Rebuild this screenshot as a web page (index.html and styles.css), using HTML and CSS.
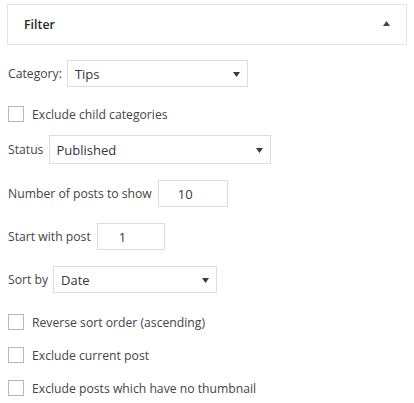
FILE: index.html
```html
<!DOCTYPE html>
<html>
<head>
<meta charset="utf-8">
<link rel="stylesheet" href="styles.css">
</head>
<body>
<div class="page">
  <div class="panel-head">
    <span class="panel-title">Filter</span>
    <svg class="toggle" width="7" height="5" viewBox="0 0 7 5"><polygon points="3.5,0 7,5 0,5" fill="#444"/></svg>
  </div>

  <div class="row r-cat">
    <span class="label">Category:</span>
    <div class="select w-cat"><span>Tips</span><svg class="caret" width="7" height="5" viewBox="0 0 7 5"><polygon points="0,0 7,0 3.5,5" fill="#3c3c3c"/></svg></div>
  </div>

  <label class="row check r-child"><span class="box"></span><span class="label">Exclude child categories</span></label>

  <div class="row r-status">
    <span class="label">Status</span>
    <div class="select w-status"><span>Published</span><svg class="caret" width="7" height="5" viewBox="0 0 7 5"><polygon points="0,0 7,0 3.5,5" fill="#3c3c3c"/></svg></div>
  </div>

  <div class="row r-num">
    <span class="label">Number of posts to show</span>
    <div class="input w-num">10</div>
  </div>

  <div class="row r-start">
    <span class="label">Start with post</span>
    <div class="input w-start">1</div>
  </div>

  <div class="row r-sort">
    <span class="label">Sort by</span>
    <div class="select w-sort"><span>Date</span><svg class="caret" width="7" height="5" viewBox="0 0 7 5"><polygon points="0,0 7,0 3.5,5" fill="#3c3c3c"/></svg></div>
  </div>

  <label class="row check r-rev"><span class="box"></span><span class="label">Reverse sort order (ascending)</span></label>
  <label class="row check r-cur"><span class="box"></span><span class="label">Exclude current post</span></label>
  <label class="row check r-thumb"><span class="box"></span><span class="label">Exclude posts which have no thumbnail</span></label>
</div>
</body>
</html>
```

FILE: styles.css
```css
html, body {
  margin: 0;
  padding: 0;
  background: #fff;
}
body {
  font-family: "Open Sans", "Noto Sans", sans-serif;
  font-size: 12.2px;
  color: #444444;
}
.page {
  padding: 4px 8px 0 8px;
  display: flex;
  flex-direction: column;
}
.panel-head {
  margin-left: -1px;
  width: 400px;
  height: 41px;
  box-sizing: border-box;
  border: 1px solid #e2e4e7;
  display: flex;
  align-items: center;
  justify-content: space-between;
  padding: 0 16px 0 16px;
}
.panel-title {
  font-weight: 600;
  color: #23282d;
  font-size: 12.4px;
}
.toggle {
  margin-right: 0;
  margin-top: -2px;
}
.row {
  display: flex;
  align-items: center;
}
.label {
  white-space: nowrap;
}
.select, .input {
  box-sizing: border-box;
  height: 27px;
  border: 1px solid #dddddd;
  display: flex;
  align-items: center;
  background: #fff;
  color: #32373c;
  font-size: 13px;
}
.select {
  justify-content: space-between;
  padding: 0 7px 0 7px;
}
.caret {
  margin-top: 1px;
}
.input {
  padding-left: 19px;
}
.r-cat { margin-top: 15px; }
.r-cat .select { margin-left: 5px; }
.w-cat { width: 181px; }

.check { height: 16px; }
.box {
  width: 16px;
  height: 16px;
  box-sizing: border-box;
  border: 1px solid #b4b9be;
  margin-right: 8px;
  flex: none;
}
.r-child { margin-top: 19px; }

.r-status { margin-top: 13px; }
.r-status .select { margin-left: 6px; height: 29px; padding-left: 6px; }
.w-status { width: 222px; }

.r-num { margin-top: 16px; }
.r-num .input { margin-left: 6px; }
.w-num { width: 70px; }

.r-start { margin-top: 16px; }
.r-start .input { margin-left: 6px; padding-left: 21px; }
.w-start { width: 68px; }

.r-sort { margin-top: 16px; }
.r-sort .select { margin-left: 5px; }
.w-sort { width: 164px; }

.r-rev { margin-top: 21px; }
.r-cur { margin-top: 17px; }
.r-thumb { margin-top: 17px; }
```
